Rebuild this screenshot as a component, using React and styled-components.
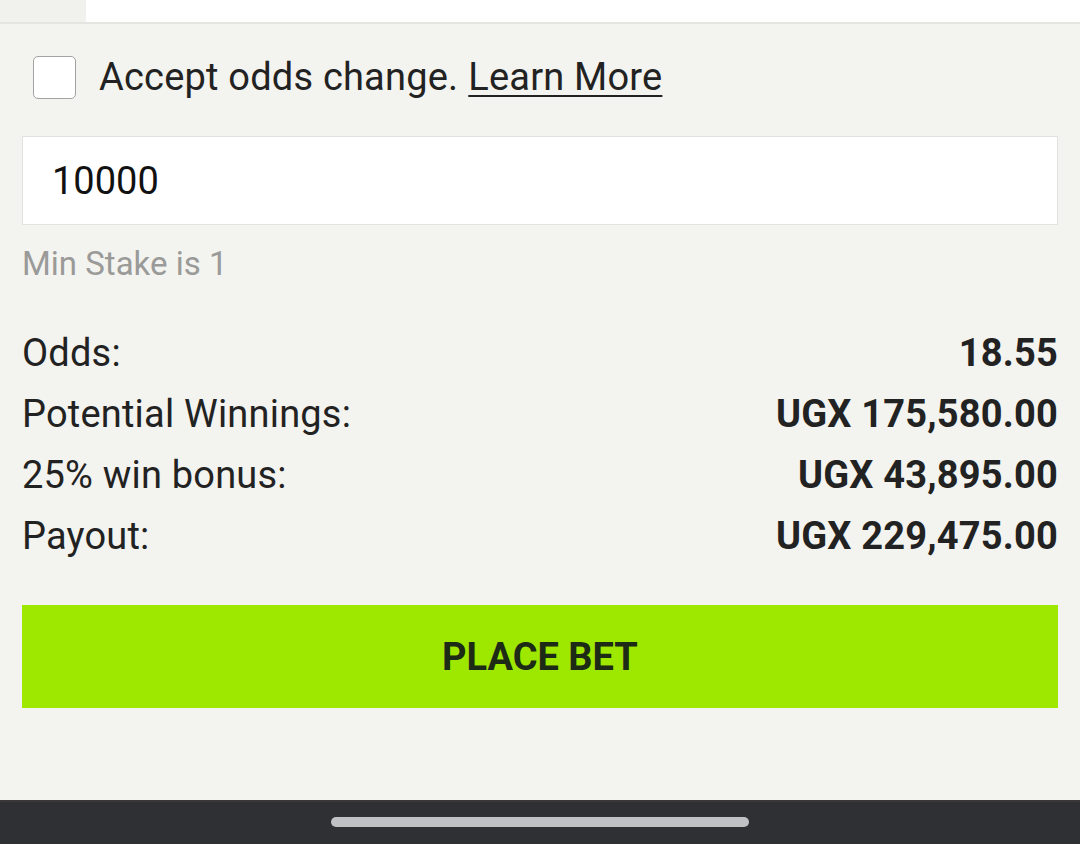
import React, { useState } from 'react';
import styled, { createGlobalStyle } from 'styled-components';

const GlobalStyle = createGlobalStyle`
    html, body {
        margin: 0;
        padding: 0;
        background: #f3f3ef;
    }
    body {
        font-family: Roboto, "Liberation Sans", Arial, sans-serif;
        color: #222;
    }
`;

const Page = styled.div`
    min-height: 844px;
    display: flex;
    flex-direction: column;
    background: #f3f3ef;
`;

const TopStrip = styled.div`
    height: 22px;
    display: flex;
    border-bottom: 2px solid #e4e4e1;
`;

const StripTab = styled.div`
    width: 86px;
    background: ${(p) => (p.$active ? '#ffffff' : '#f1f1ed')};
    flex: ${(p) => (p.$active ? 1 : 'none')};
`;

const Slip = styled.div`
    padding: 0 22px;
    display: flex;
    flex-direction: column;
`;

const AcceptRow = styled.label`
    margin-top: 31px;
    display: flex;
    align-items: center;
    gap: 23px;
    padding-left: 11px;
    font-size: 38px;
    letter-spacing: 0.2px;
    line-height: 44px;
    color: #222;
`;

const Checkbox = styled.span`
    width: 41px;
    height: 41px;
    border: 1.5px solid #a3a3a3;
    border-radius: 5px;
    background: ${(p) => (p.$checked ? '#9de800' : '#ffffff')};
    flex: none;
`;

const LearnMore = styled.a`
    color: #222;
    text-decoration: underline;
    text-decoration-thickness: 2px;
    text-underline-offset: 5px;
    margin-left: 10px;
`;

const StakeInput = styled.input`
    margin-top: 37px;
    height: 89px;
    box-sizing: border-box;
    border: 1px solid #e2e2df;
    background: #ffffff;
    padding: 0 29px;
    font-family: Roboto, "Liberation Sans", Arial, sans-serif;
    font-size: 38px;
    color: #111;
    outline: none;
`;

const Hint = styled.div`
    margin-top: 17px;
    font-size: 33px;
    line-height: 43px;
    color: #9a9a98;
`;

const Summary = styled.div`
    margin-top: 38px;
    display: flex;
    flex-direction: column;
`;

const SummaryRow = styled.div`
    display: flex;
    justify-content: space-between;
    font-size: 38px;
    letter-spacing: 0.2px;
    line-height: 61px;
`;

const Value = styled.span`
    font-weight: 700;
    color: #222;
`;

const PlaceBet = styled.button`
    margin-top: 38px;
    height: 103px;
    border: none;
    background: #9ee800;
    font-family: Roboto, "Liberation Sans", Arial, sans-serif;
    font-weight: 700;
    font-size: 38px;
    color: #1d2a16;
    cursor: pointer;
`;

const NavBar = styled.div`
    margin-top: auto;
    height: 44px;
    box-sizing: border-box;
    background: #2f3033;
    border-top: 2px solid #3a3536;
    display: flex;
    justify-content: center;
    padding-top: 15px;
`;

const NavHandle = styled.div`
    width: 418px;
    height: 10px;
    border-radius: 5px;
    background: #bfc1c3;
`;

const rows = [
    { label: 'Odds:', value: '18.55' },
    { label: 'Potential Winnings:', value: 'UGX 175,580.00' },
    { label: '25% win bonus:', value: 'UGX 43,895.00' },
    { label: 'Payout:', value: 'UGX 229,475.00' },
];

const App = () => {
    const [accept, setAccept] = useState(false);
    const [stake, setStake] = useState('10000');

    return (
        <Page>
            <GlobalStyle />
            <TopStrip>
                <StripTab />
                <StripTab $active />
            </TopStrip>
            <Slip>
                <AcceptRow onClick={() => setAccept(!accept)}>
                    <Checkbox $checked={accept} />
                    <span>
                        Accept odds change.
                        <LearnMore href="#" onClick={(e) => e.preventDefault()}>Learn More</LearnMore>
                    </span>
                </AcceptRow>
                <StakeInput value={stake} onChange={(e) => setStake(e.target.value)} />
                <Hint>Min Stake is 1</Hint>
                <Summary>
                    {rows.map((r) => (
                        <SummaryRow key={r.label}>
                            <span>{r.label}</span>
                            <Value>{r.value}</Value>
                        </SummaryRow>
                    ))}
                </Summary>
                <PlaceBet>PLACE BET</PlaceBet>
            </Slip>
            <NavBar>
                <NavHandle />
            </NavBar>
        </Page>
    );
};

export default App;
